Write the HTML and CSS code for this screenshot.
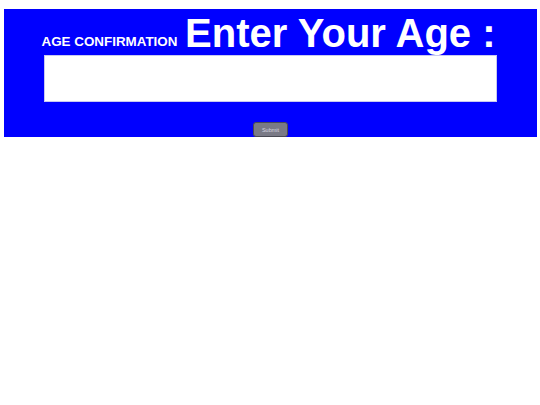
FILE: index.html
```html
<!DOCTYPE html>
<html>
<head>
<meta charset="utf-8">
<link rel="stylesheet" href="styles.css">
</head>
<body>
<div class="panel">
  <h1 class="title"><span class="small">AGE CONFIRMATION </span>Enter Your Age :</h1>
  <input class="age-input" type="text">
  <button class="submit">Submit</button>
</div>
</body>
</html>
```
FILE: styles.css
```css
html, body {
  margin: 0;
  padding: 0;
  background: #ffffff;
}
body {
  padding: 9px 3px 0 4px;
  font-family: "Liberation Sans", Arial, sans-serif;
}
.panel {
  background: #0000ff;
  padding-top: 3px;
  height: 125px;
  display: flex;
  flex-direction: column;
  align-items: center;
}
.title {
  margin: 0;
  padding-right: 4px;
  color: #ffffff;
  font-weight: bold;
  font-size: 40px;
  line-height: 43px;
  height: 43px;
  text-align: center;
  white-space: nowrap;
}
.small {
  font-size: 13.4px;
  line-height: 1;
  vertical-align: 1px;
  margin-right: 4px;
}
.age-input {
  width: 85%;
  height: 48px;
  box-sizing: border-box;
  margin: 0;
  border: 1px solid #c8c8f0;
  background: #ffffff;
}
.submit {
  margin-top: 20px;
  width: 35px;
  height: 15px;
  padding: 0;
  box-sizing: border-box;
  background: #7a7a86;
  border: 1px solid #4a4a55;
  border-radius: 3px;
  color: #d8d8e0;
  font-family: "Liberation Sans", Arial, sans-serif;
  font-size: 5.5px;
}
```
